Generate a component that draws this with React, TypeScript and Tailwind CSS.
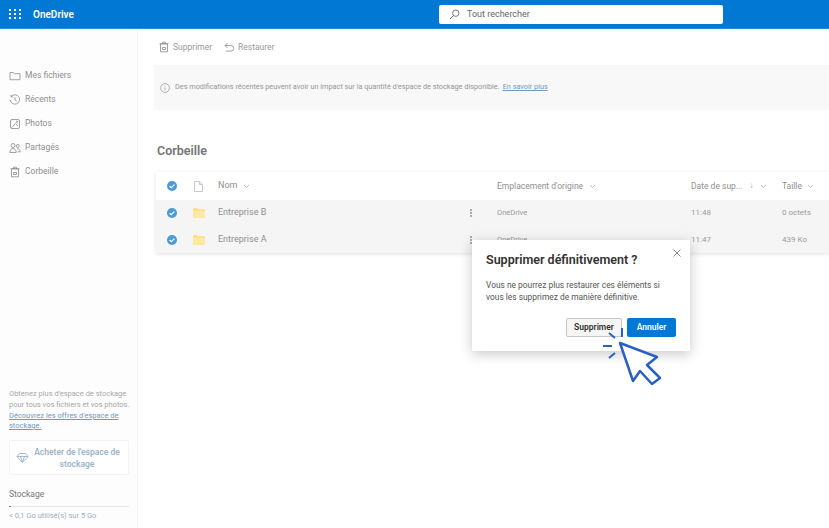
import React from "react";

const font = { fontFamily: 'Roboto,"Noto Sans",sans-serif' };

function NavIcon({ kind }: { kind: string }) {
  const c = { fill: "none", stroke: "#8a8a8a", strokeWidth: 0.8 };
  return (
    <svg width="12" height="12" viewBox="0 0 12 12" className="shrink-0" {...c}>
      {kind === "folder" && <path d="M1 2.500h3.200l1.200 1.200H11v6H1z" />}
      {kind === "recent" && (
        <>
          <path d="M2.200 2.500A4.700 4.700 0 1 1 1.200 6" />
          <path d="M2 .8v2h2M6 3.200V6l1.800 1.200" />
        </>
      )}
      {kind === "photo" && (
        <>
          <rect x="1.500" y="1.500" width="9" height="9" rx="1.500" />
          <path d="M3 9.500 6.500 5.500 9 8" />
          <circle cx="7.800" cy="3.800" r=".7" />
        </>
      )}
      {kind === "people" && (
        <>
          <circle cx="4" cy="3.500" r="2" />
          <circle cx="8.700" cy="4" r="1.500" />
          <path d="M.8 10.500c0-2.600 1.300-4 3.200-4s3.200 1.400 3.200 4zM8 6.800c2 0 3.200 1 3.200 3h-2.500" />
        </>
      )}
      {kind === "trash" && (
        <>
          <path d="M2.500 2.800h7v8h-7zM1.500 2.800h9M4.500 2.800V1.200h3v1.600" />
          <path d="M4.500 6.500h3v2h-3z" />
        </>
      )}
    </svg>
  );
}

function Check() {
  return (
    <svg width="10" height="10" viewBox="0 0 10 10" className="shrink-0">
      <circle cx="5" cy="5" r="5" fill="#4c9ad6" />
      <path d="M2.600 5.100 4.300 6.700 7.400 3.600" fill="none" stroke="#fff" strokeWidth="1.300" />
    </svg>
  );
}

function Folder() {
  return (
    <svg width="12" height="10" viewBox="0 0 12 10" className="shrink-0">
      <path d="M0 1a1 1 0 0 1 1-1h3l1.200 1.200H11a1 1 0 0 1 1 1V9a1 1 0 0 1-1 1H1a1 1 0 0 1-1-1z" fill="#fcdf82" />
      <path d="M0 3h12v6a1 1 0 0 1-1 1H1a1 1 0 0 1-1-1z" fill="#fde9a6" />
    </svg>
  );
}

function Chevron() {
  return (
    <svg width="7" height="5" viewBox="0 0 7 5" fill="none" stroke="#b0b0b0" strokeWidth="0.8" className="shrink-0">
      <path d="M1 1l2.500 2.500L6 1" />
    </svg>
  );
}

function Dots() {
  return (
    <div className="w-[10px] flex flex-col items-center gap-[1px] shrink-0">
      <span className="w-[2px] h-[2px] bg-[#aaa]" />
      <span className="w-[2px] h-[2px] bg-[#aaa]" />
      <span className="w-[2px] h-[2px] bg-[#aaa]" />
    </div>
  );
}

function Row({ name, date, size, bottom }: { name: string; date: string; size: string; bottom?: boolean }) {
  return (
    <div className={`flex items-center bg-[#f5f5f5] text-[#9a9a9a] ${bottom ? "h-[27px]" : "h-[26px]"}`}>
      <div className="w-[34px] pl-[11px]"><Check /></div>
      <div className="w-[28px] pl-[3px]"><Folder /></div>
      <div className="w-[248px] text-[9px] text-[#8f8f8f]">{name}</div>
      <Dots />
      <div className="w-[215px] pl-[21px] text-[7.500px]">OneDrive</div>
      <div className="w-[91px] text-[8px]">{date}</div>
      <div className="text-[8px]">{size}</div>
    </div>
  );
}

export default function App() {
  const nav: [string, string][] = [
    ["folder", "Mes fichiers"],
    ["recent", "Récents"],
    ["photo", "Photos"],
    ["people", "Partagés"],
    ["trash", "Corbeille"],
  ];
  return (
    <div style={font} className="relative w-[829px] h-[528px] overflow-hidden bg-white text-[#777]">
      <header className="h-[29px] bg-[#0078d4] flex items-center border-b border-[#2a8bdc]">
        <div className="w-[13px] ml-[9px] grid grid-cols-3 gap-[2px]">
          {Array.from({ length: 9 }).map((_, i) => (
            <span key={i} className="w-[2px] h-[2px] bg-white" />
          ))}
        </div>
        <div className="ml-[11px] pt-[1px] text-[10px] font-semibold text-white w-[406px]">OneDrive</div>
        <div className="w-[284px] h-[19px] bg-white rounded-[2px] flex items-center pl-[10px] gap-[7px] text-[9px] text-[#666]">
          <svg width="11" height="11" viewBox="0 0 11 11" fill="none" stroke="#777">
            <circle cx="6.800" cy="4.200" r="3.200" />
            <path d="M4.500 6.500 1 10" />
          </svg>
          <span className="pt-[2px]">Tout rechercher</span>
        </div>
      </header>

      <div className="flex h-[499px]">
        <aside className="w-[138px] shrink-0 bg-[#fdfdfd] border-r border-[#f5f5f5] flex flex-col pl-[9px] pr-[8px]">
          <nav className="mt-[39px] flex flex-col gap-[9px]">
            {nav.map(([k, t]) => (
              <div key={t} className="h-[15px] flex items-center gap-[4px] text-[8.500px] text-[#8f8f8f]">
                <NavIcon kind={k} />
                {t}
              </div>
            ))}
          </nav>
          <div className="mt-auto text-[7.500px] leading-[11px] text-[#a8a8a8] whitespace-nowrap">
            Obtenez plus d'espace de stockage<br />pour tous vos fichiers et vos photos.
          </div>
          <div className="mt-[1px] text-[7.500px] leading-[10px] text-[#6c9ac0] underline">
            Découvrez les offres d'espace de stockage.
          </div>
          <div className="mt-[9px] h-[35px] bg-white border border-[#f3f3f3] rounded-[2px] flex items-center pl-[6px] pr-[5px] gap-[2px] text-[8.500px] font-semibold leading-[12px] text-[#9db4c9]">
            <svg width="13" height="12" viewBox="0 0 13 12" fill="none" stroke="#8fa9bf" strokeWidth="0.8" className="shrink-0">
              <path d="M3.500 1.500h6l2.500 3-5.500 6-5.500-6zM1 4.500h11M4.500 4.500l2 5.500 2-5.500" />
            </svg>
            <span className="text-center flex-1">Acheter de l'espace de stockage</span>
          </div>
          <div className="mt-[13px] text-[8.500px] leading-[12px] text-[#777]">Stockage</div>
          <div className="mt-[6px] h-[1px] bg-[#e6e6e6] w-full">
            <div className="w-[2px] h-[1px] bg-[#888]" />
          </div>
          <div className="mt-[3px] mb-[7px] text-[7.500px] leading-[11px] text-[#9cb0c2]">&lt; 0,1 Go utilisé(s) sur 5 Go</div>
        </aside>

        <main className="flex-1 min-w-0">
          <div className="h-[36px] pl-[20px] flex items-center text-[8.500px] text-[#999]">
            <NavIcon kind="trash" />
            <span className="ml-[3px]">Supprimer</span>
            <svg width="11" height="11" viewBox="0 0 11 11" fill="none" stroke="#8a8a8a" strokeWidth="0.8" className="ml-[12px]">
              <path d="M3.500 1 1 3.500 3.500 6M1 3.500h6a2.800 2.800 0 0 1 0 5.600H2" />
            </svg>
            <span className="ml-[3px]">Restaurer</span>
          </div>
          <div className="ml-[16px] h-[45px] bg-[#f8f8f8] flex items-center pl-[6px] text-[7.300px] text-[#969696]">
            <svg width="10" height="10" viewBox="0 0 10 10" fill="none" stroke="#a0a0a0" strokeWidth="0.8" className="mr-[5px]">
              <circle cx="5" cy="5" r="4.400" />
              <path d="M5 4.500V7.500M5 2.500v1" />
            </svg>
            Des modifications récentes peuvent avoir un impact sur la quantité d'espace de stockage disponible.
            <span className="ml-[3px] text-[#6c9ac0] underline">En savoir plus</span>
          </div>
          <h1 className="ml-[19px] mt-[32px] text-[12.500px] leading-[18px] font-semibold text-[#757575]">Corbeille</h1>
          <div className="ml-[18px] mt-[12px] shadow-[0_1px_4px_rgba(0,0,0,0.12)]">
            <div className="h-[28px] flex items-center bg-white text-[#8f8f8f]">
              <div className="w-[34px] pl-[11px]"><Check /></div>
              <div className="w-[28px] pl-[4px]">
                <svg width="9" height="11" viewBox="0 0 9 11" fill="none" stroke="#c8c8c8">
                  <path d="M.5.500h5l3 3v7h-8zM5.500.500v3h3" />
                </svg>
              </div>
              <div className="w-[279px] flex items-center gap-[6px] text-[9px]">Nom <Chevron /></div>
              <div className="w-[194px] flex items-center gap-[6px] text-[8.500px]">Emplacement d'origine <Chevron /></div>
              <div className="w-[91px] flex items-center text-[8.500px]">
                Date de sup...
                <span className="ml-[7px] text-[8px]">↓</span>
                <span className="ml-[6px]"><Chevron /></span>
              </div>
              <div className="flex items-center gap-[5px] text-[8.500px]">Taille <Chevron /></div>
            </div>
            <Row name="Entreprise B" date="11:48" size="0 octets" />
            <Row name="Entreprise A" date="11:47" size="439 Ko" bottom />
          </div>
        </main>
      </div>

      <div className="absolute left-[472px] top-[240px] w-[218px] h-[111px] bg-white shadow-[0_3px_12px_rgba(0,0,0,0.22)]">
        <svg width="8" height="8" viewBox="0 0 8 8" stroke="#8a8a8a" className="absolute right-[9px] top-[9px]">
          <path d="M.5.500l7 7M7.500.500l-7 7" />
        </svg>
        <div className="ml-[14px] mt-[11px] text-[12.500px] leading-[18px] font-semibold text-[#323130]">Supprimer définitivement ?</div>
        <div className="ml-[14px] mt-[10px] text-[8.400px] leading-[12px] text-[#555]">
          Vous ne pourrez plus restaurer ces éléments si<br />vous les supprimez de manière définitive.
        </div>
        <div className="mt-[15px] mr-[14px] flex justify-end gap-[5px] text-[8.500px] font-semibold">
          <div className="w-[56px] h-[19px] border border-[#c8c6c4] bg-[#f5f5f5] rounded-[2px] flex items-center justify-center text-[#323130]">Supprimer</div>
          <div className="w-[49px] h-[19px] bg-[#0078d4] rounded-[2px] flex items-center justify-center text-white">Annuler</div>
        </div>
      </div>

      <svg width="70" height="70" viewBox="600 318 70 70" className="absolute left-[600px] top-[318px]" fill="none" stroke="#2a5fc4">
        <path d="M620 343 657 357 647 365 660 378 652 384 640 371 633 381z" fill="#fff" strokeWidth="2.500" strokeLinejoin="round" />
        <path d="M622 328v9M609 333l6 5M603 346h9M609 358l6-5" strokeWidth="2" />
      </svg>
    </div>
  );
}
